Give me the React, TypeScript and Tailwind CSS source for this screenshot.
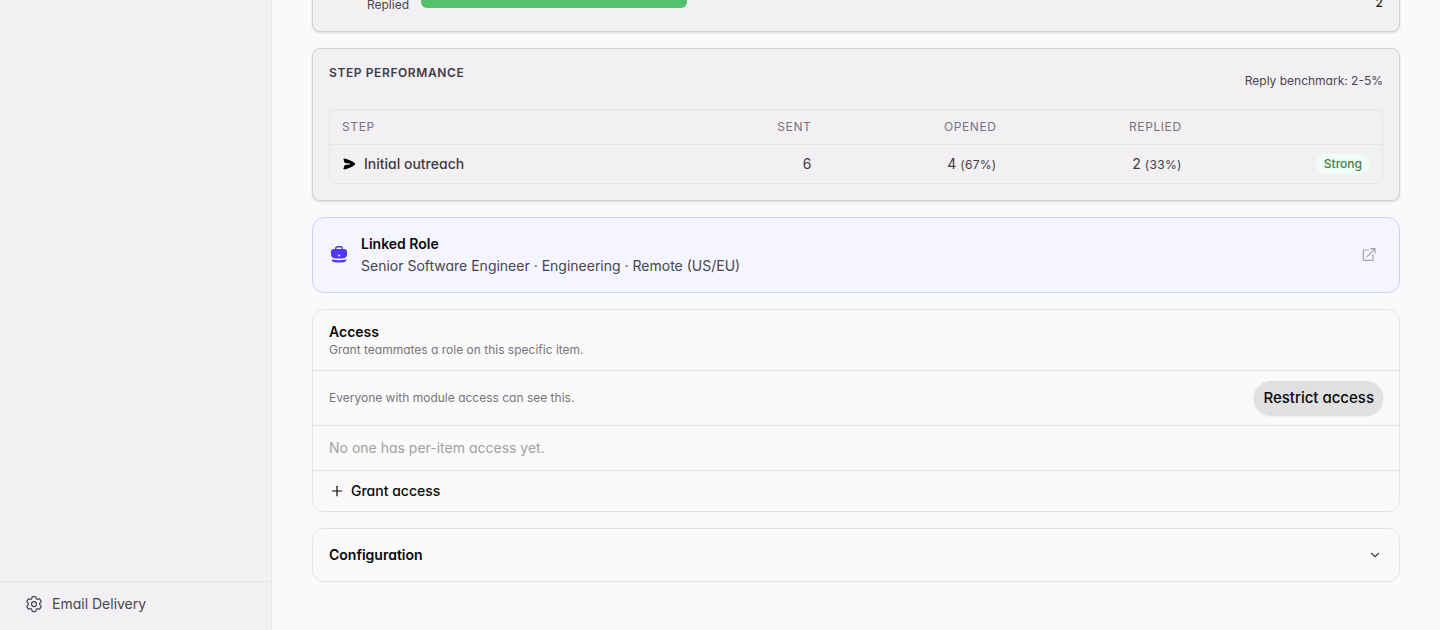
import { ChevronDown, Plus } from 'lucide-react';
import type { ReactNode } from 'react';

interface StepRow {
  name: string;
  sent: number;
  opened: number;
  openedRate: string;
  replied: number;
  repliedRate: string;
  rating: string;
}

const steps: StepRow[] = [
  {
    name: 'Initial outreach',
    sent: 6,
    opened: 4,
    openedRate: '(67%)',
    replied: 2,
    repliedRate: '(33%)',
    rating: 'Strong',
  },
];

function GearIcon() {
  return (
    <svg
      className="size-5 shrink-0"
      viewBox="0 0 24 24"
      fill="none"
      stroke="currentColor"
      strokeWidth="1.5"
      strokeLinecap="round"
      strokeLinejoin="round"
      aria-hidden="true"
    >
      <path d="M9.594 3.94c.09-.542.56-.94 1.11-.94h2.593c.55 0 1.02.398 1.11.94l.213 1.281c.063.374.313.686.645.87.074.04.147.083.22.127.325.196.72.257 1.075.124l1.217-.456a1.125 1.125 0 0 1 1.37.49l1.296 2.247a1.125 1.125 0 0 1-.26 1.431l-1.003.827c-.293.241-.438.613-.43.992a7.723 7.723 0 0 1 0 .255c-.008.378.137.75.43.991l1.004.827c.424.35.534.955.26 1.43l-1.298 2.247a1.125 1.125 0 0 1-1.369.491l-1.217-.456c-.355-.133-.75-.072-1.076.124a6.47 6.47 0 0 1-.22.128c-.331.183-.581.495-.644.869l-.213 1.281c-.09.543-.56.94-1.11.94h-2.594c-.55 0-1.019-.398-1.11-.94l-.213-1.281c-.062-.374-.312-.686-.644-.87a6.52 6.52 0 0 1-.22-.127c-.325-.196-.72-.257-1.076-.124l-1.217.456a1.125 1.125 0 0 1-1.369-.49l-1.297-2.247a1.125 1.125 0 0 1 .26-1.431l1.004-.827c.292-.24.437-.613.43-.991a6.932 6.932 0 0 1 0-.255c.007-.38-.138-.751-.43-.992l-1.004-.827a1.125 1.125 0 0 1-.26-1.43l1.297-2.247a1.125 1.125 0 0 1 1.37-.491l1.216.456c.356.133.751.072 1.076-.124.072-.044.146-.086.22-.128.332-.183.582-.495.644-.869l.214-1.28Z" />
      <circle cx="12" cy="12" r="3" />
    </svg>
  );
}

function SendIcon() {
  return (
    <svg className="size-3.5 shrink-0 text-black" viewBox="0 0 14 14" fill="currentColor" aria-hidden="true">
      <path d="M1.5 2.3c-.2-.6.2-1 .8-.9 4 .6 7.500 2.200 10.400 4.600.6.500.6 1.300 0 1.800-2.900 2.400-6.400 4.100-10.400 4.700-.6.100-1-.4-.8-.9L2.700 7.900l5-.5a.5.5 0 0 0 0-1l-5-.5Z" />
    </svg>
  );
}

function BriefcaseIcon() {
  return (
    <svg className="size-5 shrink-0 text-indigo-600" viewBox="0 0 20 20" fill="currentColor" aria-hidden="true">
      <path
        fillRule="evenodd"
        d="M6 4.100V3.500A2.500 2.500 0 0 1 8.500 1h3A2.500 2.500 0 0 1 14 3.500v.6h1.200A2.800 2.800 0 0 1 18 6.900v3.200a3 3 0 0 1-2.200 2.900C14 13.400 12 13.600 10 13.600s-4-.2-5.800-.6A3 3 0 0 1 2 10.100V6.900a2.800 2.800 0 0 1 2.800-2.800Zm1.400 0h5.200v-.6a1.100 1.100 0 0 0-1.100-1.100h-3a1.100 1.100 0 0 0-1.100 1.100Zm2.600 7.300a1 1 0 1 0 0-2 1 1 0 0 0 0 2Z"
        clipRule="evenodd"
      />
      <path d="M3.100 14.400c4.500 1 9.300 1 13.800 0 .4 0 .6.300.5.700-.4 1.400-1.500 2.100-3 2.200-2.900.300-5.900.300-8.800 0-1.500-.1-2.600-.8-3-2.200-.1-.4.100-.7.500-.7Z" />
    </svg>
  );
}

function ExternalIcon() {
  return (
    <svg
      className="size-4"
      viewBox="0 0 24 24"
      fill="none"
      stroke="currentColor"
      strokeWidth="1.8"
      strokeLinecap="round"
      strokeLinejoin="round"
      aria-hidden="true"
    >
      <path d="M11.500 4.500H4.500a1 1 0 0 0-1 1v13.500a1 1 0 0 0 1 1H17a1 1 0 0 0 1-1v-7.500M9 14.500 21 2.500M14.500 2.500H21v6.500" />
    </svg>
  );
}

function Panel({ children }: { children: ReactNode }) {
  return (
    <section className="rounded-lg border border-[#d3d1d5] bg-[#f3f0f4] p-4 shadow-sm">
      {children}
    </section>
  );
}

function Sidebar() {
  return (
    <aside className="flex w-68 shrink-0 flex-col justify-end border-r border-[#e7e5e9] bg-[#f3f0f4]">
      <nav className="border-t border-[#e7e5e9] px-4 pt-1 pb-2">
        <a href="#email-delivery" className="flex h-9 items-center gap-2 px-2 text-sm text-[#49454f]">
          <GearIcon />
          Email Delivery
        </a>
      </nav>
    </aside>
  );
}

function FunnelPanel() {
  return (
    <Panel>
      <div className="flex items-end gap-3">
        <span className="w-20 pb-0.5 text-right text-xs text-[#49454f]">Replied</span>
        <div className="mb-[7px] h-5 flex-1">
          <div className="h-full w-[29%] rounded-md bg-[#55c16e]" />
        </div>
        <span className="w-8 pb-1 text-right text-xs font-medium text-zinc-900">2</span>
      </div>
    </Panel>
  );
}

function StepPerformance() {
  return (
    <Panel>
      <div className="mb-3 flex h-8 items-center justify-between">
        <h2 className="self-start text-xs font-semibold tracking-wider text-[#3f3b45] uppercase">
          Step Performance
        </h2>
        <span className="text-xs text-[#49454f]">Reply benchmark: 2-5%</span>
      </div>
      <div className="rounded-lg border border-[#e5e3e8]">
        <table className="w-full table-fixed text-right text-sm text-[#3f3b45]">
          <thead>
            <tr className="h-[34px] border-b border-[#e5e3e8] text-xs tracking-wider text-[#77737c] uppercase">
              <th className="px-3 text-left font-normal">Step</th>
              <th className="w-[17.6%] px-3 font-normal">Sent</th>
              <th className="w-[17.6%] px-3 font-normal">Opened</th>
              <th className="w-[17.6%] px-3 font-normal">Replied</th>
              <th className="w-[17.9%] px-3" aria-label="Rating" />
            </tr>
          </thead>
          <tbody>
            {steps.map((step) => (
              <tr key={step.name} className="h-[39px]">
                <td className="px-3 text-left font-medium">
                  <span className="flex items-center gap-2">
                    <SendIcon />
                    {step.name}
                  </span>
                </td>
                <td className="px-3">{step.sent}</td>
                <td className="px-3">
                  {step.opened} <span className="text-xs tracking-wide">{step.openedRate}</span>
                </td>
                <td className="px-3">
                  {step.replied} <span className="text-xs tracking-wide">{step.repliedRate}</span>
                </td>
                <td className="px-3">
                  <span className="inline-block rounded-full bg-green-50 px-2 py-0.5 align-middle text-xs font-medium text-[#3f7d53]">
                    {step.rating}
                  </span>
                </td>
              </tr>
            ))}
          </tbody>
        </table>
      </div>
    </Panel>
  );
}

function LinkedRole() {
  return (
    <section className="flex items-center gap-3 rounded-xl border border-[#c9d2fb] bg-[#f4f5ff] p-4">
      <BriefcaseIcon />
      <div className="flex-1 text-sm">
        <h2 className="font-semibold text-zinc-950">Linked Role</h2>
        <p className="mt-0.5 text-[#49454f]">
          Senior Software Engineer · Engineering · Remote (US/EU)
        </p>
      </div>
      <a href="#linked-role" aria-label="Open linked role" className="p-1.5 text-[#a3a1a8]">
        <ExternalIcon />
      </a>
    </section>
  );
}

function AccessCard() {
  return (
    <section className="divide-y divide-[#e4e4e7] rounded-xl border border-[#e4e4e7]">
      <div className="px-4 py-3">
        <h2 className="text-sm font-semibold text-zinc-950">Access</h2>
        <p className="text-xs text-[#77757b]">Grant teammates a role on this specific item.</p>
      </div>
      <div className="flex items-center justify-between px-4 py-2.5">
        <p className="text-xs text-[#77757b]">Everyone with module access can see this.</p>
        <button
          type="button"
          className="h-[34px] rounded-full bg-[#e0e0e0] px-[9px] text-[15px] font-medium text-zinc-950 shadow-sm"
        >
          Restrict access
        </button>
      </div>
      <p className="px-4 py-3 text-sm text-[#a1a1a6]">No one has per-item access yet.</p>
      <button
        type="button"
        className="flex h-10 w-full items-center gap-1.5 px-4 text-sm font-medium text-zinc-950"
      >
        <Plus className="size-4" strokeWidth={1.8} />
        Grant access
      </button>
    </section>
  );
}

function ConfigurationCard() {
  return (
    <section className="rounded-xl border border-[#e4e4e7]">
      <button
        type="button"
        className="flex w-full items-center justify-between p-4 text-sm font-semibold text-zinc-950"
      >
        Configuration
        <ChevronDown className="mx-px size-3.5 text-[#49454f]" />
      </button>
    </section>
  );
}

export default function App() {
  return (
    <div className="flex h-screen overflow-hidden bg-[#fafafa] font-['Inter',sans-serif] [font-feature-settings:'cv11']">
      <Sidebar />
      <main className="min-w-0 flex-1 px-10">
        {/* scrolled so the funnel panel is cut off by the top edge */}
        <div className="-mt-[29px] flex flex-col gap-4">
          <FunnelPanel />
          <StepPerformance />
          <LinkedRole />
          <AccessCard />
          <ConfigurationCard />
        </div>
      </main>
    </div>
  );
}
